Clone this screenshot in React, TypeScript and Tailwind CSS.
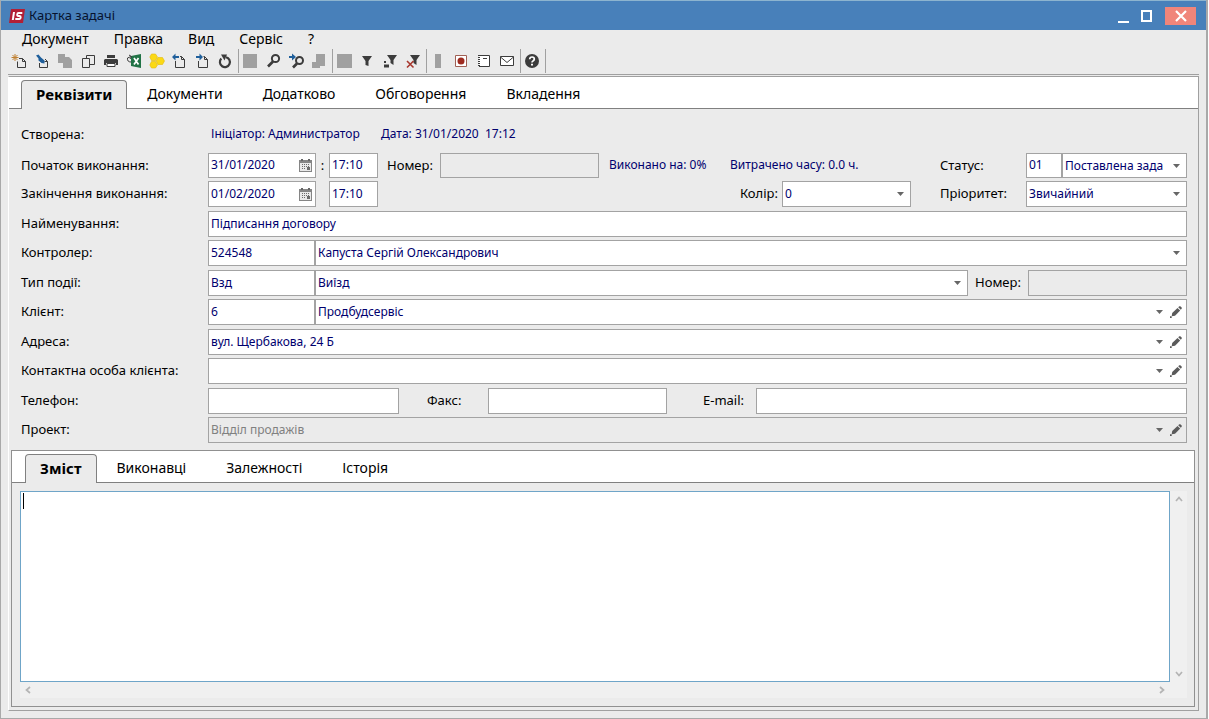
import React, { useId } from "react";

const BORDER = "border border-[#a3a3a3]";
const FIELD = "h-full min-w-0 rounded-none pl-[2px] text-xs text-[#00006e] outline-none";

function Caret() {
  return (
    <svg viewBox="0 0 7 4" className="pointer-events-none h-1 w-[7px] shrink-0" aria-hidden="true">
      <path d="M0 0H7L3.5 4Z" fill="#666" />
    </svg>
  );
}

function Pencil() {
  return (
    <svg viewBox="0 0 12 12" className="h-3 w-3" aria-hidden="true" fill="#5a5a5a">
      <path d="M8.200 1.200L9.300.3Q10-.1 10.700.5L11.600 1.400Q12.200 2.100 11.600 2.800L10.800 3.800Z" />
      <path d="M7.500 1.900L10.200 4.600L5 9.700L1.700 10.300L2.200 6.900Z" />
      <path d="M0 10.300H1.700V12H0Z" />
    </svg>
  );
}

function Calendar() {
  return (
    <svg viewBox="0 0 13 13" className="h-[13px] w-[13px]" aria-hidden="true">
      <path d="M0 1H13V13H0Z" fill="#858585" />
      <path d="M2 0H4V2H2ZM9 0H11V2H9Z" fill="#666" />
      <path d="M1 4H12V12H1Z" fill="#e9e9e9" />
      <path
        d="M3 5h1v1H3zM5 5h1v1H5zM7 5h1v1H7zM9 5h1v1H9zM3 7h1v1H3zM5 7h1v1H5zM7 7h1v1H7zM9 7h1v1H9zM3 9h1v1H3zM5 9h1v1H5zM8 8h3v3H8z"
        fill="#6c6c6c"
      />
    </svg>
  );
}

type TextProps = { id?: string; label?: string; value?: string; className?: string; disabled?: boolean };

function Text({ id, label, value = "", className = "", disabled }: TextProps) {
  return (
    <input
      id={id}
      aria-label={label}
      defaultValue={value}
      disabled={disabled}
      className={`${FIELD} ${BORDER} pb-[2px] ${disabled ? "bg-[#ebebeb]" : "bg-white"} ${className}`}
    />
  );
}

type ComboProps = TextProps & { edit?: boolean };

function Combo({ id, label, value = "", className = "", edit, disabled }: ComboProps) {
  return (
    <div className={`relative flex h-full min-w-0 items-center ${BORDER} ${disabled ? "bg-[#ebebeb]" : "bg-white"} ${className}`}>
      <select
        id={id}
        aria-label={label}
        disabled={disabled}
        className={`${FIELD} flex-1 appearance-none bg-transparent ${edit ? "pr-1" : "pr-5"} ${disabled ? "text-[#808080]" : ""}`}
      >
        <option>{value}</option>
      </select>
      {edit ? (
        <>
          <Caret />
          <button type="button" aria-label="Редагувати" className="mr-1 ml-[7px]">
            <Pencil />
          </button>
        </>
      ) : (
        <span className="pointer-events-none absolute right-[6px]">
          <Caret />
        </span>
      )}
    </div>
  );
}

function DateField({ id, value }: { id: string; value: string }) {
  return (
    <div className={`flex h-full w-[108px] items-center bg-white ${BORDER}`}>
      <input id={id} defaultValue={value} className={`${FIELD} w-0 flex-1 pb-[2px]`} />
      <button type="button" aria-label="Календар" className="mr-[3px]">
        <Calendar />
      </button>
    </div>
  );
}

function Label({ id, className = "", children }: { id?: string; className?: string; children: React.ReactNode }) {
  return (
    <label htmlFor={id} className={`shrink-0 pb-[2px] whitespace-nowrap ${className}`}>
      {children}
    </label>
  );
}

function Row({ label, id, short, children }: { label: string; id?: string; short?: boolean; children: React.ReactNode }) {
  return (
    <div className={`flex items-center ${short ? "h-[25px]" : "h-[26px]"}`}>
      <Label id={id} className="w-[187px]">
        {label}
      </Label>
      {children}
    </div>
  );
}

function Pair({ children }: { children: React.ReactNode }) {
  return <div className="flex flex-col gap-[3px]">{children}</div>;
}

function Tabs({ items, className = "" }: { items: string[]; className?: string }) {
  return (
    <div role="tablist" className={`flex h-8 items-end border-b border-[#808080] bg-white ${className}`}>
      {items.map((t, i) =>
        i === 0 ? (
          <button
            key={t}
            type="button"
            role="tab"
            aria-selected="true"
            className="-mb-px h-[29px] rounded-t border border-b-0 border-[#808080] bg-[#ebebeb] px-[14px] pb-[3px] text-[15px] font-bold"
          >
            {t}
          </button>
        ) : (
          <button key={t} type="button" role="tab" aria-selected="false" className="h-[28px] px-5 text-sm">
            {t}
          </button>
        ),
      )}
    </div>
  );
}

const DARK = "#3c3c3c";
const GREY = "#a0a0a0";

const tools: (null | { name: string; icon: React.ReactNode })[] = [
  {
    name: "Створити",
    icon: (
      <>
        <path d="M6.5 8.500V14.500H14.500V8.500L11.500 5.500H8M11.500 5.500V8.500H14.500" fill="none" stroke={DARK} />
        <path d="M4 1V8M.5 4.500H7.500M1.500 2L6.500 7M6.500 2L1.500 7" stroke="#c08030" strokeWidth="1" />
      </>
    ),
  },
  {
    name: "Змінити",
    icon: (
      <>
        <path d="M5.500 10V14.500H13.500V8.500L11 6M10.500 8.500H13.500" fill="none" stroke={DARK} />
        <path d="M2 2.500L4.500 1.500L7 4.500L10.500 7.500L10.500 10.500L7.500 10L4.500 7.500L4.500 5.500Z" fill="#1f5f9b" />
      </>
    ),
  },
  { name: "Копіювати", icon: <path d="M1 1H8V4H12L15 7V15H6V10H1Z" fill={GREY} /> },
  {
    name: "Дублювати",
    icon: (
      <>
        <path d="M6.500 5V2.500H14.500V11.500H10" fill="none" stroke={DARK} />
        <path d="M2.500 5.500H9.500V14.500H2.500Z" fill="none" stroke={DARK} />
      </>
    ),
  },
  {
    name: "Друк",
    icon: (
      <>
        <path d="M4 2H12V5H4ZM2 6H14L15 7V12H13V10H3V12H1V7Z" fill={DARK} />
        <path d="M4 10.500H12V13.500H4Z" fill="#fff" stroke={DARK} />
      </>
    ),
  },
  {
    name: "Експорт в Excel",
    icon: (
      <>
        <path d="M5 3L15 1V15L5 13Z" fill="#217346" />
        <path d="M8 5L12.500 11.500M12.500 5L8 11.500" stroke="#fff" strokeWidth="1.700" />
        <path d="M5 9Q1 9 1.500 5L5 3.500M3 2L5.500 3.500L4 6" fill="none" stroke={DARK} />
      </>
    ),
  },
  {
    name: "Зв'язки",
    icon: (
      <g fill="#fbd915" stroke="#e3b90f" strokeWidth=".6">
        <path d="M2.500 1H6.500L8.500 4L6.500 7.500H2.500L.8 4Z" />
        <path d="M2.500 8.500H6.500L8.500 12L6.500 15H2.500L.8 12Z" />
        <path d="M9 4.500H13.500L15.500 8L13.500 11.500H9L7 8Z" />
      </g>
    ),
  },
  {
    name: "Імпорт",
    icon: (
      <>
        <path d="M3.500 8V14.500H12.500V6.500L9.500 3.500H8M9.500 3.500V6.500H12.500" fill="none" stroke={DARK} />
        <path d="M0 4L3.500.5V3H7V5H3.500V7.500Z" fill="#1f5f9b" />
      </>
    ),
  },
  {
    name: "Експорт",
    icon: (
      <>
        <path d="M3.500 8V14.500H12.500V6.500L9.500 3.500H8.500M9.500 3.500V6.500H12.500" fill="none" stroke={DARK} />
        <path d="M8 4L4.500.5V3H1V5H4.500V7.500Z" fill="#1f5f9b" />
      </>
    ),
  },
  {
    name: "Оновити",
    icon: (
      <>
        <path d="M3.300 5.600A5 5 0 1 0 8 4.200" fill="none" stroke={DARK} strokeWidth="2.200" />
        <path d="M3 1.500H9L6.500 7.500Z" fill={DARK} />
      </>
    ),
  },
  null,
  { name: "Зберегти", icon: <path d="M0 1H14V15H0Z" fill={GREY} /> },
  {
    name: "Пошук",
    icon: (
      <>
        <circle cx="9.500" cy="5.500" r="3.600" fill="none" stroke={DARK} strokeWidth="2" />
        <path d="M7 8.500L2 13.500" stroke={DARK} strokeWidth="2.600" />
      </>
    ),
  },
  {
    name: "Шукати далі",
    icon: (
      <>
        <circle cx="10.500" cy="7.500" r="3.500" fill="none" stroke={DARK} strokeWidth="2" />
        <path d="M8 10.500L4 14.500" stroke={DARK} strokeWidth="2.600" />
        <path d="M0 3H3V.5L7 4L3 7.500V5H0Z" fill="#1f5f9b" />
      </>
    ),
  },
  { name: "Замінити", icon: <path d="M4 1H13V13H8V15H0V9H4Z" fill={GREY} /> },
  null,
  { name: "Таблиця", icon: <path d="M0 1H15V15H0Z" fill={GREY} /> },
  { name: "Фільтр", icon: <path d="M2 3H12L8.500 8V13L5.500 12V8Z" fill={DARK} /> },
  {
    name: "Фільтр за значенням",
    icon: (
      <>
        <path d="M4 2H14L10.500 7V12L7.500 10V7Z" fill={DARK} />
        <path d="M1 8H3V10H1ZM1 11.500H6V14.500H1Z" fill={DARK} />
      </>
    ),
  },
  {
    name: "Скасувати фільтр",
    icon: (
      <>
        <path d="M4 2H14L10.500 7V12L7.500 10V7Z" fill={DARK} />
        <path d="M1 8L7.500 14.500M7.500 8L1 14.500" stroke="#a8382e" strokeWidth="1.600" />
      </>
    ),
  },
  null,
  { name: "Панель", icon: <path d="M4 1H10V15H4Z" fill={GREY} /> },
  {
    name: "Запис",
    icon: (
      <>
        <path d="M1.500 2.500H12.500V13.500H1.500Z" fill="#fff" stroke="#a06055" />
        <circle cx="7" cy="8" r="3.500" fill="#9e2b20" />
      </>
    ),
  },
  {
    name: "Нотатки",
    icon: (
      <>
        <path d="M2 2.500H12.500V13.500H2" fill="#fff" stroke={DARK} />
        <path d="M2 2V14" stroke={DARK} strokeWidth="2" strokeDasharray="1 1" />
        <path d="M6 5.500H10" stroke={DARK} />
      </>
    ),
  },
  {
    name: "Пошта",
    icon: (
      <>
        <path d="M.5 3.500H13.500V12.500H.5Z" fill="#fff" stroke={DARK} />
        <path d="M.5 4L7 9.500L13.500 4" fill="none" stroke={DARK} />
      </>
    ),
  },
  null,
  {
    name: "Довідка",
    icon: (
      <>
        <circle cx="7" cy="8" r="7" fill={DARK} />
        <path d="M4.700 6.300Q4.800 4 7.100 4T9.300 6.200Q9.200 7.300 8 7.900Q7 8.400 7 9.600" fill="none" stroke="#fff" strokeWidth="1.700" />
        <path d="M6 10.800H8V12.600H6Z" fill="#fff" />
      </>
    ),
  },
  null,
];

function ScrollArrow({ d }: { d: string }) {
  return (
    <svg viewBox="0 0 8 8" className="h-2 w-2" aria-hidden="true">
      <path d={d} fill="none" stroke="#b4b4b4" strokeWidth="1.700" />
    </svg>
  );
}

export default function App() {
  const uid = useId();
  const id = (name: string) => `${uid}-${name}`;

  return (
    <div className="flex min-h-screen bg-white pr-px font-['Noto_Sans',sans-serif] text-[13px] leading-5 text-black">
      <div className="flex min-w-0 flex-1 flex-col border-r-2 border-b border-l border-[#a9a9a9] bg-[#ebebeb]">
        <header className="flex h-[30px] items-center border-t border-[#8db4cf] bg-[#4880ba] pr-[10px] pl-2">
          <svg viewBox="0 0 16 14" className="mr-1 h-[14px] w-4" aria-hidden="true">
            <path d="M2 0H16L14 14H0Z" fill="#b31f35" />
            <path d="M4 3H6L4.800 11H2.800Z" fill="#fff" />
            <path d="M13.300 4H9.600Q8.300 4 8.200 5.500T9.300 7H10.600Q11.900 7.200 11.700 8.500T10.300 10H6.300" fill="none" stroke="#fff" strokeWidth="1.900" />
          </svg>
          <h1 className="pb-[2px] text-[#06122e]">Картка задачі</h1>
          <div className="ml-auto flex items-center">
            <button type="button" aria-label="Згорнути" className="flex h-[18px] w-[23px] items-end justify-center pb-[2px]">
              <span className="h-[2px] w-[11px] bg-white" />
            </button>
            <button type="button" aria-label="Розгорнути" className="flex h-[18px] w-[23px] items-center justify-center">
              <span className="h-3 w-[11px] border-2 border-white" />
            </button>
            <button type="button" aria-label="Закрити" className="ml-[7px] flex h-[18px] w-[31px] items-center justify-center bg-[#f0857a]">
              <svg viewBox="0 0 12 12" className="h-3 w-3" aria-hidden="true">
                <path d="M1 1L11 11M11 1L1 11" stroke="#fff" strokeWidth="2.200" />
              </svg>
            </button>
          </div>
        </header>

        <nav className="flex h-[17px] items-center gap-[25px] pl-[21px] text-sm">
          {["Документ", "Правка", "Вид", "Сервіс", "?"].map((m) => (
            <button key={m} type="button">
              {m}
            </button>
          ))}
        </nav>

        <div role="toolbar" aria-label="Панель інструментів" className="mx-[7px] flex h-[28px] items-center border-b border-[#a0a0a0]">
          {tools.map((t, i) =>
            t ? (
              <button key={i} type="button" aria-label={t.name} className="flex w-[23px]">
                <svg viewBox="0 0 16 16" className="ml-[3px] h-4 w-4" aria-hidden="true">
                  {t.icon}
                </svg>
              </button>
            ) : (
              <span key={i} className="mr-px h-6 w-px bg-[#a0a0a0]" />
            ),
          )}
        </div>

        <main className="mx-[7px] mt-px mb-[7px] flex flex-1 flex-col border border-[#a0a0a0] border-l-white">
          <Tabs items={["Реквізити", "Документи", "Додатково", "Обговорення", "Вкладення"]} className="pl-3" />

          <form className="flex flex-col gap-1 pt-[15px] pr-[11px] pl-3">
            <div className="flex h-5 items-center">
              <span className="w-[190px]">Створена:</span>
              <span className="w-[170px] text-xs text-[#00006e]">Ініціатор: Администратор</span>
              <span className="text-xs whitespace-pre text-[#00006e]">{"Дата: 31/01/2020  17:12"}</span>
            </div>

            <div className="mt-[5px]">
              <Pair>
                <Row label="Початок виконання:" id={id("start")} short>
                  <DateField id={id("start")} value="31/01/2020" />
                  <span className="w-[13px] pb-[2px] text-center">:</span>
                  <Text label="Час початку" value="17:10" className="w-[49px]" />
                  <Label id={id("number")} className="ml-[9px] w-[53px]">
                    Номер:
                  </Label>
                  <Text id={id("number")} disabled className="w-[159px]" />
                  <span className="ml-[10px] w-[121px] pb-[2px] text-xs text-[#00006e]">Виконано на: 0%</span>
                  <span className="pb-[2px] text-xs text-[#00006e]">Витрачено часу: 0.0 ч.</span>
                  <Label id={id("status")} className="ml-auto w-[86px]">
                    Статус:
                  </Label>
                  <Text id={id("status")} value="01" className="w-9" />
                  <Combo label="Назва статусу" value="Поставлена зада" className="w-[125px]" />
                </Row>
                <Row label="Закінчення виконання:" id={id("end")}>
                  <DateField id={id("end")} value="01/02/2020" />
                  <span className="w-[13px]" />
                  <Text label="Час закінчення" value="17:10" className="w-[49px]" />
                  <Label id={id("color")} className="ml-auto w-[42px]">
                    Колір:
                  </Label>
                  <Combo id={id("color")} value="0" className="w-[129px]" />
                  <Label id={id("priority")} className="ml-[29px] w-[86px]">
                    Пріоритет:
                  </Label>
                  <Combo id={id("priority")} value="Звичайний" className="w-[161px]" />
                </Row>
              </Pair>
            </div>

            <Pair>
              <Row label="Найменування:" id={id("name")}>
                <Text id={id("name")} value="Підписання договору" className="flex-1" />
              </Row>
              <Row label="Контролер:" id={id("controller")}>
                <Text id={id("controller")} value="524548" className="w-[107px]" />
                <Combo label="Ім'я контролера" value="Капуста Сергій Олександрович" className="flex-1" />
              </Row>
            </Pair>

            <Pair>
              <Row label="Тип події:" id={id("event")}>
                <Text id={id("event")} value="Взд" className="w-[107px]" />
                <Combo label="Назва типу події" value="Виїзд" className="flex-1" />
                <Label id={id("event-number")} className="ml-[7px] w-[53px]">
                  Номер:
                </Label>
                <Text id={id("event-number")} disabled className="w-[159px]" />
              </Row>
              <Row label="Клієнт:" id={id("client")}>
                <Text id={id("client")} value="6" className="w-[107px]" />
                <Combo label="Назва клієнта" value="Продбудсервіс" className="flex-1" edit />
              </Row>
            </Pair>

            <Pair>
              <Row label="Адреса:" id={id("address")}>
                <Combo id={id("address")} value="вул. Щербакова, 24 Б" className="flex-1" edit />
              </Row>
              <Row label="Контактна особа клієнта:" id={id("contact")}>
                <Combo id={id("contact")} className="flex-1" edit />
              </Row>
            </Pair>

            <Pair>
              <Row label="Телефон:" id={id("phone")}>
                <Text id={id("phone")} className="w-[191px]" />
                <Label id={id("fax")} className="ml-7 w-[61px]">
                  Факс:
                </Label>
                <Text id={id("fax")} className="w-[179px]" />
                <Label id={id("email")} className="ml-9 w-[53px]">
                  E-mail:
                </Label>
                <Text id={id("email")} className="flex-1" />
              </Row>
              <Row label="Проект:" id={id("project")}>
                <Combo id={id("project")} value="Відділ продажів" className="flex-1" edit disabled />
              </Row>
            </Pair>
          </form>

          <section className="mt-[7px] mr-[3px] mb-[3px] ml-[2px] flex flex-1 flex-col border border-[#909090]">
            <Tabs items={["Зміст", "Виконавці", "Залежності", "Історія"]} className="pl-[13px]" />
            <div className="mt-2 mr-[7px] mb-2 ml-2 grid flex-1 grid-cols-[1fr_17px] grid-rows-[1fr_16px] bg-[#f0f0f0]">
              <div className="relative flex">
                <textarea
                  aria-label="Зміст"
                  className="w-full resize-none border border-[#6fa5c8] bg-white p-1 text-xs outline-none"
                />
                <span className="absolute top-[2px] left-[3px] h-4 w-px bg-black" />
              </div>
              <div className="flex flex-col items-center justify-between pt-1 pb-1">
                <ScrollArrow d="M1 6L4 2.500L7 6" />
                <ScrollArrow d="M1 2L4 5.500L7 2" />
              </div>
              <div className="flex items-center justify-between px-1">
                <ScrollArrow d="M6 1L2.500 4L6 7" />
                <ScrollArrow d="M2 1L5.500 4L2 7" />
              </div>
            </div>
          </section>
        </main>
      </div>
    </div>
  );
}
